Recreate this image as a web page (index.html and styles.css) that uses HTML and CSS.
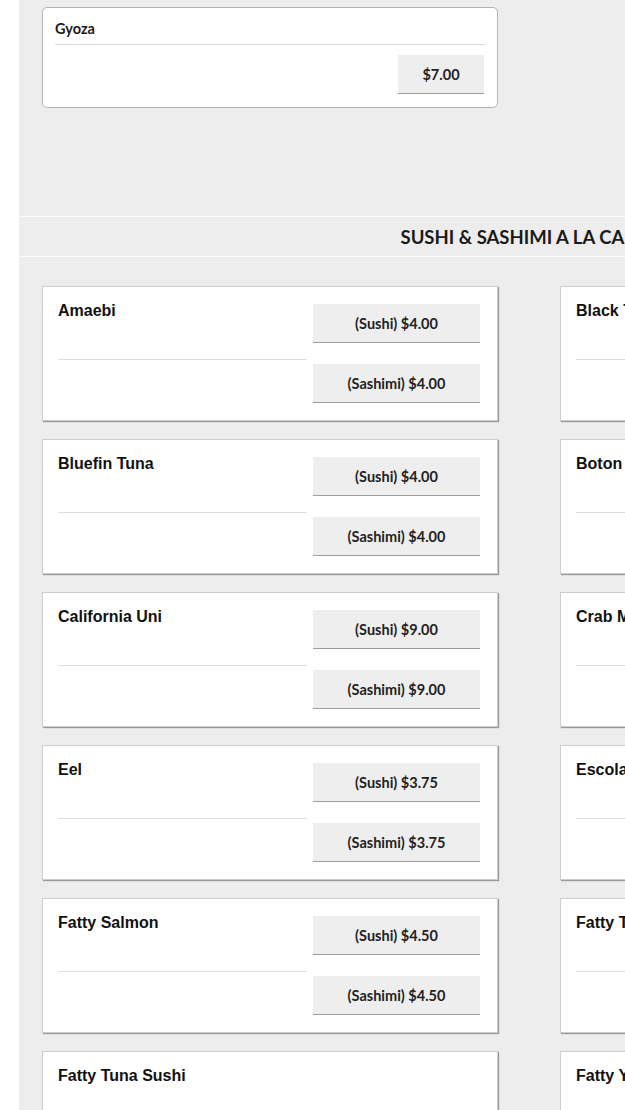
FILE: index.html
```html
<!DOCTYPE html>
<html lang="en">
<head>
<meta charset="utf-8">
<title>Menu</title>
<link rel="stylesheet" href="styles.css">
</head>
<body>
<div class="page">
  <section class="grid grid-top">
    <article class="simple-card">
      <h3 class="simple-name">Gyoza</h3>
      <div class="simple-prices">
        <button class="price">$7.00</button>
      </div>
    </article>
  </section>

  <h2 class="section-title">SUSHI &amp; SASHIMI A LA CARTE</h2>

  <section class="grid grid-items">
    <article class="dish">
      <div class="info"><h3 class="name">Amaebi</h3></div>
      <div class="prices"><button class="price">(Sushi) $4.00</button><button class="price">(Sashimi) $4.00</button></div>
    </article>
    <article class="dish">
      <div class="info"><h3 class="name">Black Tobiko</h3></div>
      <div class="prices"><button class="price">(Sushi) $3.50</button><button class="price">(Sashimi) $3.50</button></div>
    </article>
    <article class="dish">
      <div class="info"><h3 class="name">Bluefin Tuna</h3></div>
      <div class="prices"><button class="price">(Sushi) $4.00</button><button class="price">(Sashimi) $4.00</button></div>
    </article>
    <article class="dish">
      <div class="info"><h3 class="name">Boton Ebi</h3></div>
      <div class="prices"><button class="price">(Sushi) $6.00</button><button class="price">(Sashimi) $6.00</button></div>
    </article>
    <article class="dish">
      <div class="info"><h3 class="name">California Uni</h3></div>
      <div class="prices"><button class="price">(Sushi) $9.00</button><button class="price">(Sashimi) $9.00</button></div>
    </article>
    <article class="dish">
      <div class="info"><h3 class="name">Crab Meat</h3></div>
      <div class="prices"><button class="price">(Sushi) $3.50</button><button class="price">(Sashimi) $3.50</button></div>
    </article>
    <article class="dish">
      <div class="info"><h3 class="name">Eel</h3></div>
      <div class="prices"><button class="price">(Sushi) $3.75</button><button class="price">(Sashimi) $3.75</button></div>
    </article>
    <article class="dish">
      <div class="info"><h3 class="name">Escolar</h3></div>
      <div class="prices"><button class="price">(Sushi) $3.75</button><button class="price">(Sashimi) $3.75</button></div>
    </article>
    <article class="dish">
      <div class="info"><h3 class="name">Fatty Salmon</h3></div>
      <div class="prices"><button class="price">(Sushi) $4.50</button><button class="price">(Sashimi) $4.50</button></div>
    </article>
    <article class="dish">
      <div class="info"><h3 class="name">Fatty Tuna</h3></div>
      <div class="prices"><button class="price">(Sushi) $8.00</button><button class="price">(Sashimi) $8.00</button></div>
    </article>
    <article class="dish dish-single">
      <div class="info"><h3 class="name">Fatty Tuna Sushi</h3></div>
      <div class="prices"><button class="price">$8.00</button></div>
    </article>
    <article class="dish dish-single">
      <div class="info"><h3 class="name">Fatty Yellowtail</h3></div>
      <div class="prices"><button class="price">$4.50</button></div>
    </article>
  </section>
</div>
</body>
</html>
```

FILE: styles.css
```css
html, body {
  margin: 0;
  padding: 0;
  overflow: hidden;
  background: #ffffff;
}

.page {
  margin-left: 19px;
  width: 1020px;
  min-height: 1200px;
  background: #ededed;
  padding-top: 7px;
  font-family: Lato, "Open Sans", "DejaVu Sans", sans-serif;
  color: #1c1c1c;
}

.grid {
  display: grid;
  grid-template-columns: 456px 456px;
  column-gap: 62px;
  padding: 0 23px;
}

/* top simple card */
.simple-card {
  box-sizing: border-box;
  height: 101px;
  background: #fff;
  border: 1px solid #b3b3b3;
  border-radius: 5px;
  padding: 0 12px;
}

.simple-name {
  margin: 0;
  padding: 13px 0 7px;
  font-size: 14.5px;
  line-height: 16px;
  font-weight: 700;
  color: #1a1a1a;
  border-bottom: 1px solid #dcdcdc;
}

.simple-prices {
  display: flex;
  justify-content: flex-end;
  margin-top: 10px;
  padding-right: 1px;
}

.simple-prices .price {
  width: 86px;
}

/* section title */
.section-title {
  margin: 108px 0 0;
  height: 41px;
  box-sizing: border-box;
  border-top: 1px solid #fafafa;
  border-bottom: 1px solid #fafafa;
  text-align: center;
  font-size: 18.5px;
  line-height: 40px;
  font-weight: 700;
  color: #1a1a1a;
}

/* item cards */
.grid-items {
  padding-top: 29px;
  row-gap: 18px;
}

.dish {
  box-sizing: border-box;
  height: 135px;
  display: flex;
  gap: 6px;
  background: #fff;
  border: 1px solid #cdcdcd;
  box-shadow: 1px 1px 1px rgba(0, 0, 0, 0.35);
  padding: 17px 17px 17px 15px;
}

.info {
  flex: 1;
  min-width: 0;
}

.name {
  margin: -3px 0 0;
  box-sizing: border-box;
  height: 59px;
  border-bottom: 1px solid #dedede;
  font-family: "Liberation Sans", Arial, sans-serif;
  font-size: 16px;
  line-height: 19px;
  font-weight: 700;
  color: #111;
  white-space: nowrap;
}

.prices {
  width: 167px;
  flex: none;
  display: flex;
  flex-direction: column;
  gap: 21px;
}

/* single-price dish: name across, price underneath */
.dish-single {
  flex-direction: column;
  gap: 10px;
  height: auto;
}

.dish-single .info {
  flex: none;
}

.dish-single .prices {
  align-self: flex-end;
  width: 86px;
}

.price {
  box-sizing: border-box;
  height: 39px;
  width: 100%;
  margin: 0;
  padding: 0;
  border: none;
  border-bottom: 1px solid #9d9d9d;
  background: #eeeeee;
  font-family: Lato, "Open Sans", "DejaVu Sans", sans-serif;
  font-size: 14.5px;
  font-weight: 700;
  color: #222;
  text-align: center;
  cursor: pointer;
}
```
